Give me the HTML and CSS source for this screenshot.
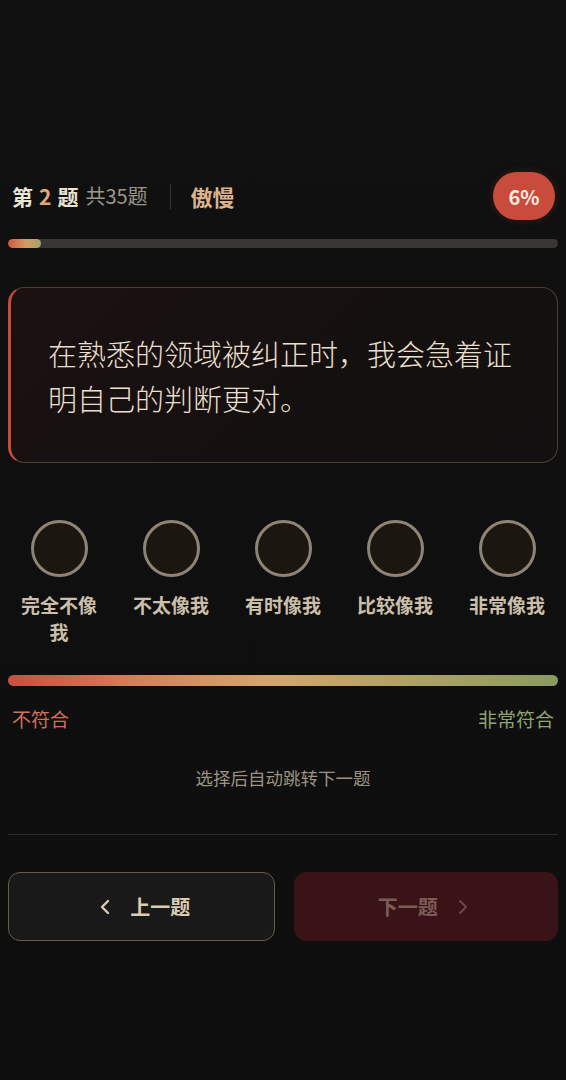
FILE: index.html
```html
<!DOCTYPE html>
<html lang="zh-CN">
<head>
<meta charset="utf-8">
<title>测评</title>
<link rel="stylesheet" href="styles.css">
</head>
<body>
<div class="page">
  <div class="header">
    <div class="title">
      <span class="q">第<span class="num">2</span>题</span>
      <span class="total">共35题</span>
      <span class="sep"></span>
      <span class="dim">傲慢</span>
    </div>
    <div class="badge">6%</div>
  </div>

  <div class="progress"><div class="fill" style="width:6%"></div></div>

  <div class="card">
    <p class="question">在熟悉的领域被纠正时，我会急着证明自己的判断更对。</p>
  </div>

  <div class="options">
    <div class="option"><div class="circle"></div><div class="label">完全不像我</div></div>
    <div class="option"><div class="circle"></div><div class="label">不太像我</div></div>
    <div class="option"><div class="circle"></div><div class="label">有时像我</div></div>
    <div class="option"><div class="circle"></div><div class="label">比较像我</div></div>
    <div class="option"><div class="circle"></div><div class="label">非常像我</div></div>
  </div>

  <div class="scale"></div>
  <div class="scale-labels">
    <span class="low">不符合</span>
    <span class="high">非常符合</span>
  </div>

  <div class="hint">选择后自动跳转下一题</div>

  <div class="divider"></div>

  <div class="nav">
    <button class="btn prev">
      <svg width="10" height="16" viewBox="0 0 10 16"><polyline points="8,2 2,8 8,14" fill="none" stroke="currentColor" stroke-width="2.4" stroke-linecap="round" stroke-linejoin="round"/></svg>
      <span>上一题</span>
    </button>
    <button class="btn next">
      <span>下一题</span>
      <svg width="10" height="16" viewBox="0 0 10 16"><polyline points="2,2 8,8 2,14" fill="none" stroke="currentColor" stroke-width="1.8" stroke-linecap="round" stroke-linejoin="round"/></svg>
    </button>
  </div>
</div>
</body>
</html>
```

FILE: styles.css
```css
* { box-sizing: border-box; }

html, body {
  margin: 0;
  background: #0f0f0f;
}

body {
  font-family: "Noto Sans CJK SC", "Noto Sans", sans-serif;
  color: #e6dccb;
}

.page {
  padding: 172px 8px 60px;
  min-height: 1080px;
  background: linear-gradient(180deg, #111111 0%, #0f0f0f 40%, #0e0e0e 100%);
}

.header {
  display: flex;
  align-items: center;
  justify-content: space-between;
  height: 48px;
}

.title {
  display: flex;
  align-items: center;
  padding-left: 4px;
}

.q {
  font-size: 21px;
  font-weight: 700;
  color: #ebe3d3;
  line-height: 30px;
}

.num {
  color: #e0a878;
  margin: 0 6px;
}

.total {
  font-size: 20px;
  color: #9b958b;
  margin-left: 7px;
  line-height: 30px;
}

.sep {
  width: 1px;
  height: 25px;
  background: #3a3530;
  margin: 0 20px 0 22px;
}

.dim {
  font-size: 22px;
  font-weight: 700;
  color: #dcb28c;
  line-height: 30px;
}

.badge {
  width: 62px;
  height: 48px;
  border-radius: 24px;
  background: #c94b3b;
  color: #f6ebe2;
  font-size: 20px;
  font-weight: 700;
  display: flex;
  align-items: center;
  justify-content: center;
  margin-right: 3px;
  box-shadow: 0 0 10px rgba(201, 75, 59, 0.2);
}

.progress {
  margin-top: 19px;
  height: 9px;
  border-radius: 5px;
  background: #393734;
  overflow: hidden;
}

.fill {
  height: 100%;
  border-radius: 5px;
  background: linear-gradient(90deg, #cf5a43 0%, #d49a62 55%, #a3a666 100%);
}

.card {
  margin-top: 39px;
  border: 1px solid #4a4030;
  border-left: 3px solid #c84a3c;
  border-radius: 16px;
  background: linear-gradient(135deg, #1b1111 0%, #151010 55%, #121010 100%);
  padding: 43px 38px 41px 37px;
}

.question {
  margin: 0;
  font-size: 29px;
  line-height: 45px;
  color: #e9dfcd;
  font-weight: 300;
}

.options {
  margin-top: 57px;
  display: grid;
  grid-template-columns: repeat(5, 1fr);
  column-gap: 10px;
}

.option {
  display: flex;
  flex-direction: column;
  align-items: center;
}

.circle {
  width: 57px;
  height: 57px;
  border-radius: 50%;
  border: 3px solid #8d8476;
  background: #1b1610;
}

.label {
  margin-top: 14px;
  padding: 0 6px;
  font-size: 19px;
  font-weight: 700;
  line-height: 27px;
  color: #cbbfa9;
  text-align: center;
}

.scale {
  margin-top: 30px;
  height: 11px;
  border-radius: 6px;
  background: linear-gradient(90deg, #cc4d3e 0%, #d3845a 25%, #d4a66c 48%, #b0a264 72%, #8a9c5e 100%);
}

.scale-labels {
  margin-top: 21px;
  display: flex;
  justify-content: space-between;
  padding: 0 4px;
  font-size: 19px;
  line-height: 24px;
}

.low { color: #d2705a; }
.high { color: #90a46e; }

.hint {
  margin-top: 36px;
  text-align: center;
  font-size: 17.5px;
  line-height: 22px;
  color: #9c9282;
}

.divider {
  margin-top: 45px;
  height: 1px;
  background: #2d2a26;
}

.nav {
  margin-top: 37px;
  display: flex;
  gap: 19px;
}

.btn {
  flex: 1;
  height: 69px;
  border-radius: 12px;
  display: flex;
  align-items: center;
  justify-content: center;
  gap: 20px;
  font-family: "Noto Sans CJK SC", "Noto Sans", sans-serif;
  font-size: 20px;
  font-weight: 700;
  padding: 0;
  cursor: pointer;
}

.prev {
  background: #19191a;
  border: 1px solid #685c46;
  color: #dacdb2;
  padding-left: 8px;
}

.next {
  background: #3a1318;
  border: 1px solid #3a1318;
  color: #7c5c56;
  padding-right: 6px;
}

.next svg { color: #6c4a4a; }
```
